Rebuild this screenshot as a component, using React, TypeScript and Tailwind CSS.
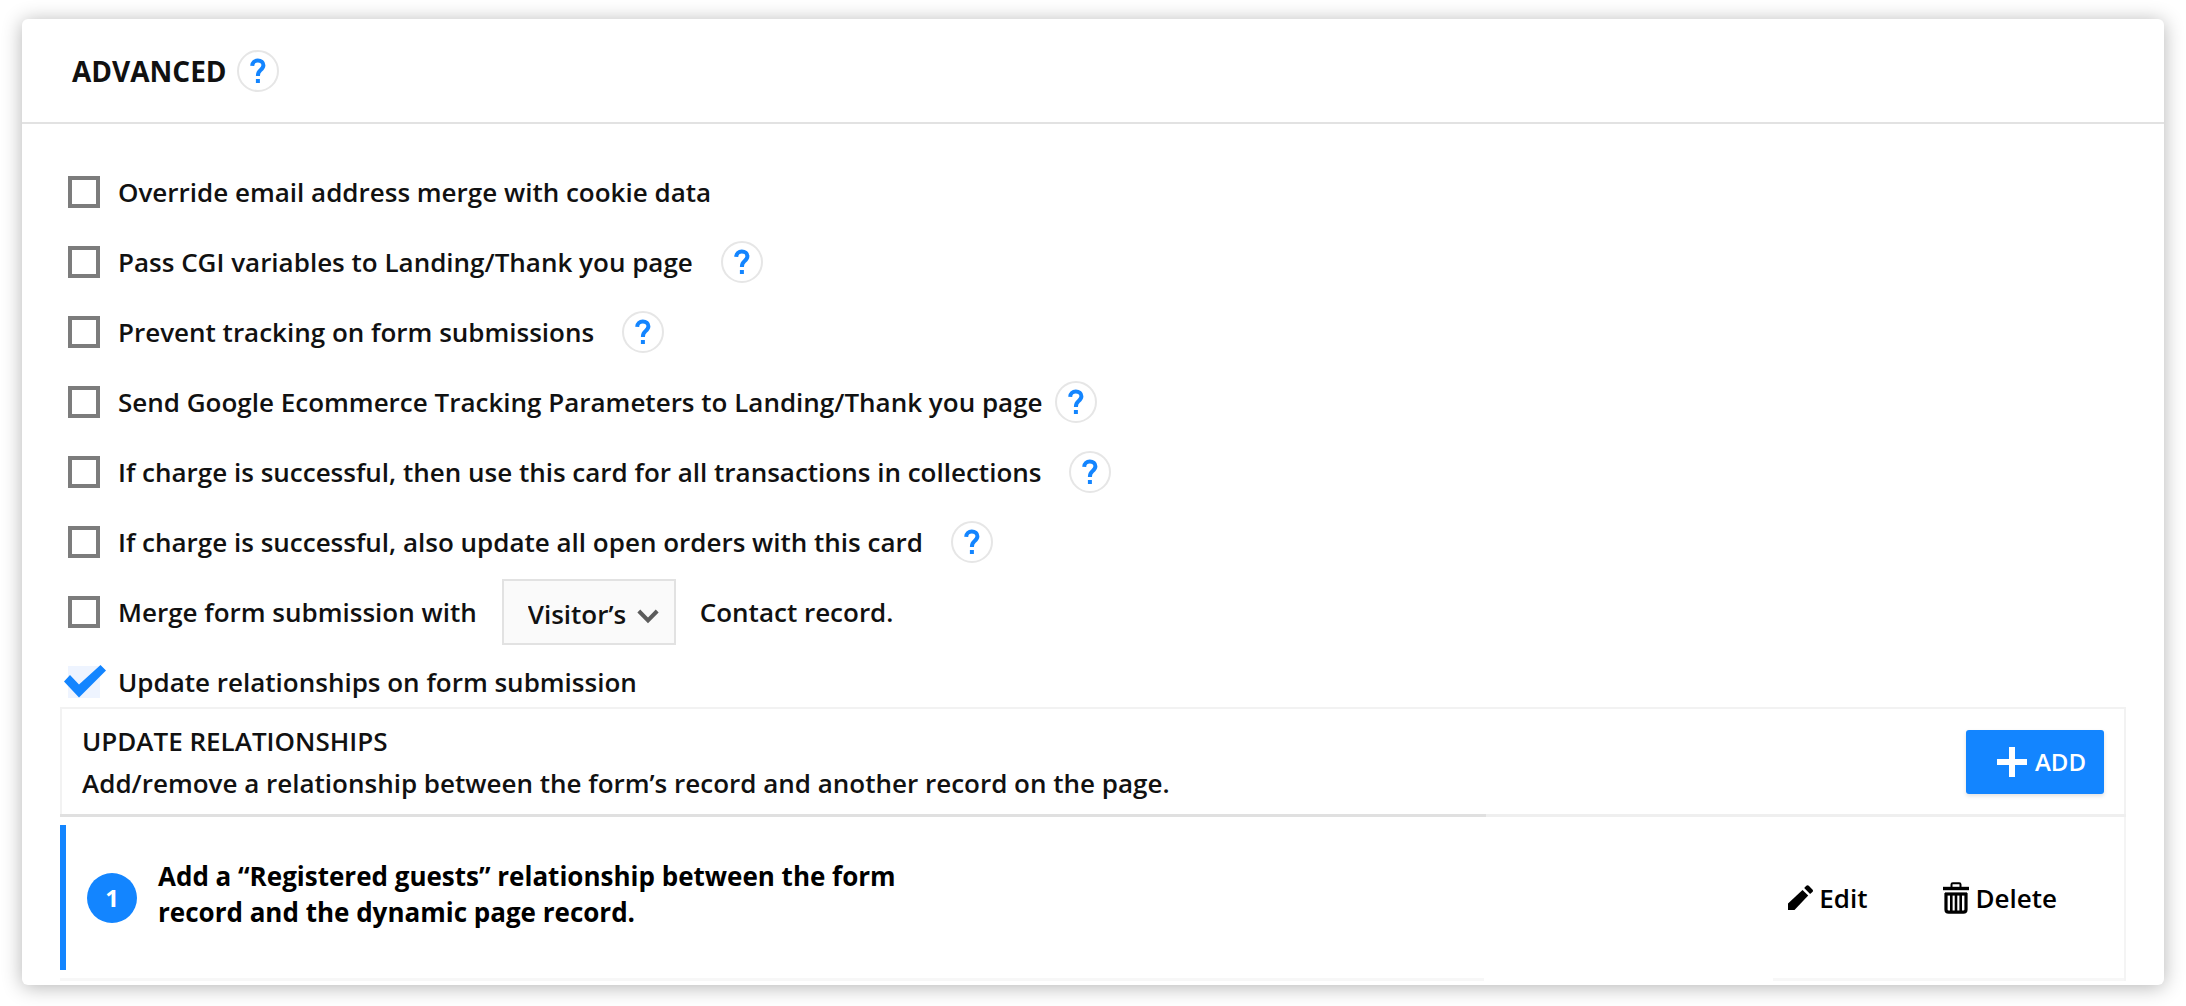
import type { ReactNode } from "react";

type Option = {
  id: string;
  label: string;
  help?: "near" | "far";
};

const options: Option[] = [
  { id: "override-email", label: "Override email address merge with cookie data" },
  { id: "pass-cgi", label: "Pass CGI variables to Landing/Thank you page", help: "far" },
  { id: "prevent-tracking", label: "Prevent tracking on form submissions", help: "far" },
  {
    id: "google-ecommerce",
    label: "Send Google Ecommerce Tracking Parameters to Landing/Thank you page",
    help: "near",
  },
  {
    id: "charge-collections",
    label: "If charge is successful, then use this card for all transactions in collections",
    help: "far",
  },
  {
    id: "charge-orders",
    label: "If charge is successful, also update all open orders with this card",
    help: "far",
  },
];

function HelpButton() {
  return (
    <button
      type="button"
      aria-label="Help"
      className="flex size-[42px] shrink-0 items-center justify-center rounded-full border-2 border-[#e6e6e6] bg-white text-[#1385ff]"
    >
      <svg width="16" height="26" viewBox="0 0 16 26" fill="none" aria-hidden>
        <path
          d="M2.200 7.800C2.400 4.600 4.600 2.600 7.800 2.600c3.300 0 5.600 1.900 5.600 4.700 0 2.300-1.400 3.600-3 4.900C8.500 13.700 7.900 14.900 7.900 18"
          stroke="currentColor"
          strokeWidth="4"
        />
        <rect x="5.900" y="21" width="4" height="4" fill="currentColor" />
      </svg>
    </button>
  );
}

function CheckRow({ id, label, children }: { id: string; label: string; children?: ReactNode }) {
  return (
    <div className="flex h-[50px] items-center">
      <input
        id={id}
        type="checkbox"
        className="size-8 shrink-0 appearance-none border-4 border-[#7c7c7c] bg-white"
      />
      <label htmlFor={id} className="ml-[18px]">
        {label}
      </label>
      {children}
    </div>
  );
}

function PencilIcon() {
  return (
    <svg width="25" height="25" viewBox="0 0 25 25" fill="currentColor" aria-hidden>
      <path d="M0 25v-6.500L14.500 4.900l5.700 5.700L6.500 25H0Z" />
      <path d="m16.200 3.100 2.100-2.300c.8-.8 1.700-.8 2.500 0l3.600 3.600c.8.8.8 1.700 0 2.500l-2.300 2-5.900-5.800Z" />
    </svg>
  );
}

function TrashIcon() {
  return (
    <svg width="26" height="32" viewBox="0 0 26 32" fill="none" stroke="currentColor" aria-hidden>
      <path d="M8.500 6V2.500c0-.8.500-1.300 1.300-1.300h6.400c.8 0 1.300.5 1.300 1.300V6" strokeWidth="2" />
      <path d="M0 6.500h26" strokeWidth="3.400" />
      <path d="M3 11v16.500c0 1.800 1 2.700 2.700 2.700h14.600c1.700 0 2.700-.9 2.700-2.700V11" strokeWidth="3.200" />
      <path d="M2 12h22" strokeWidth="3.200" />
      <path d="M8.300 12v18M13 12v18M17.700 12v18" strokeWidth="2.600" />
    </svg>
  );
}

export default function App() {
  return (
    <main className="px-[22px] pt-[19px] pb-[22px] font-['Open_Sans',sans-serif] text-[26px] leading-9 font-semibold text-[#111]">
      <section className="rounded-md bg-white pb-1 shadow-[0_2px_20px_rgba(0,0,0,0.3)]">
        <header className="flex h-[105px] items-center gap-[10px] border-b-2 border-[#e2e2e2] pl-[50px]">
          <h1 className="text-[28px] font-bold">ADVANCED</h1>
          <HelpButton />
        </header>

        <div className="pt-[43px] pr-[38px] pl-[38px]">
          <div className="flex flex-col gap-5 pl-2">
            {options.map((o) => (
              <CheckRow key={o.id} id={o.id} label={o.label}>
                {o.help && (
                  <div className={o.help === "near" ? "ml-3" : "ml-7"}>
                    <HelpButton />
                  </div>
                )}
              </CheckRow>
            ))}

            <CheckRow id="merge-submission" label="Merge form submission with">
              <div className="relative mr-6 ml-[25px]">
                <select
                  aria-label="Contact record to merge with"
                  className="block h-[66px] w-[174px] appearance-none border-2 border-[#e2e2e2] bg-[#fafafa] pt-1 pl-6"
                >
                  <option>Visitor’s</option>
                </select>
                <svg
                  className="pointer-events-none absolute top-[30px] right-[17px]"
                  width="22"
                  height="15"
                  viewBox="0 0 22 15"
                  fill="none"
                  aria-hidden
                >
                  <path d="m1.800 2 9.200 9.500L20.200 2" stroke="#5c5c5c" strokeWidth="4" />
                </svg>
              </div>
              <span>Contact record.</span>
            </CheckRow>

            <div className="flex h-[50px] items-center">
              <div className="relative size-8 shrink-0">
                <input
                  id="update-relationships"
                  type="checkbox"
                  defaultChecked
                  className="block size-8 appearance-none bg-[#eef4ff]"
                />
                <svg
                  className="pointer-events-none absolute -top-px -left-1"
                  width="42"
                  height="34"
                  viewBox="0 0 42 34"
                  aria-hidden
                >
                  <path d="M0 16.500 6 10l9 9.500L36.500 0 42 5.500 15 32.500Z" fill="#1385ff" />
                </svg>
              </div>
              <label htmlFor="update-relationships" className="ml-[18px]">
                Update relationships on form submission
              </label>
            </div>
          </div>

          <div className="flex h-[107px] items-center justify-between border-2 border-b-0 border-[#f2f2f2] pr-5 pl-5">
            <div className="leading-[42px]">
              <h2>UPDATE RELATIONSHIPS</h2>
              <p>Add/remove a relationship between the form’s record and another record on the page.</p>
            </div>
            <button
              type="button"
              className="flex h-16 w-[138px] shrink-0 items-center justify-end gap-2 rounded-[3px] bg-[#1385ff] pr-[18px] text-[24px] text-white shadow-[0_2px_4px_rgba(0,0,0,0.12)]"
            >
              <svg width="30" height="30" viewBox="0 0 30 30" aria-hidden>
                <path d="M15 0v30M0 15h30" stroke="currentColor" strokeWidth="6" />
              </svg>
              ADD
            </button>
          </div>

          {/* the rules are darker under the description column than under the actions */}
          <div className="flex h-[3px]">
            <div className="w-[69%] bg-[#e0e0e0]" />
            <div className="flex-1 bg-[#efefef]" />
          </div>

          <div className="border-r-2 border-[#f4f4f4] pt-2">
            <div className="flex h-[145px] items-center border-l-[6px] border-[#1385ff]">
              <span className="ml-[21px] flex size-[50px] shrink-0 items-center justify-center rounded-full bg-[#1385ff] text-[24px] font-bold text-white">
                1
              </span>
              <p className="ml-[21px] w-[760px] pb-2 font-bold text-black">
                Add a “Registered guests” relationship between the form record and the dynamic page
                record.
              </p>
              <div className="ml-auto flex gap-[76px] pr-[67px] text-black">
                <button type="button" className="flex items-center gap-[6px]">
                  <PencilIcon />
                  Edit
                </button>
                <button type="button" className="flex items-center gap-[6px]">
                  <TrashIcon />
                  Delete
                </button>
              </div>
            </div>
            <div className="mt-2 flex h-[3px] justify-between">
              <div className="w-[69%] bg-[#f7f7f7]" />
              <div className="w-[17%] bg-[#f7f7f7]" />
            </div>
          </div>
        </div>
      </section>
    </main>
  );
}
